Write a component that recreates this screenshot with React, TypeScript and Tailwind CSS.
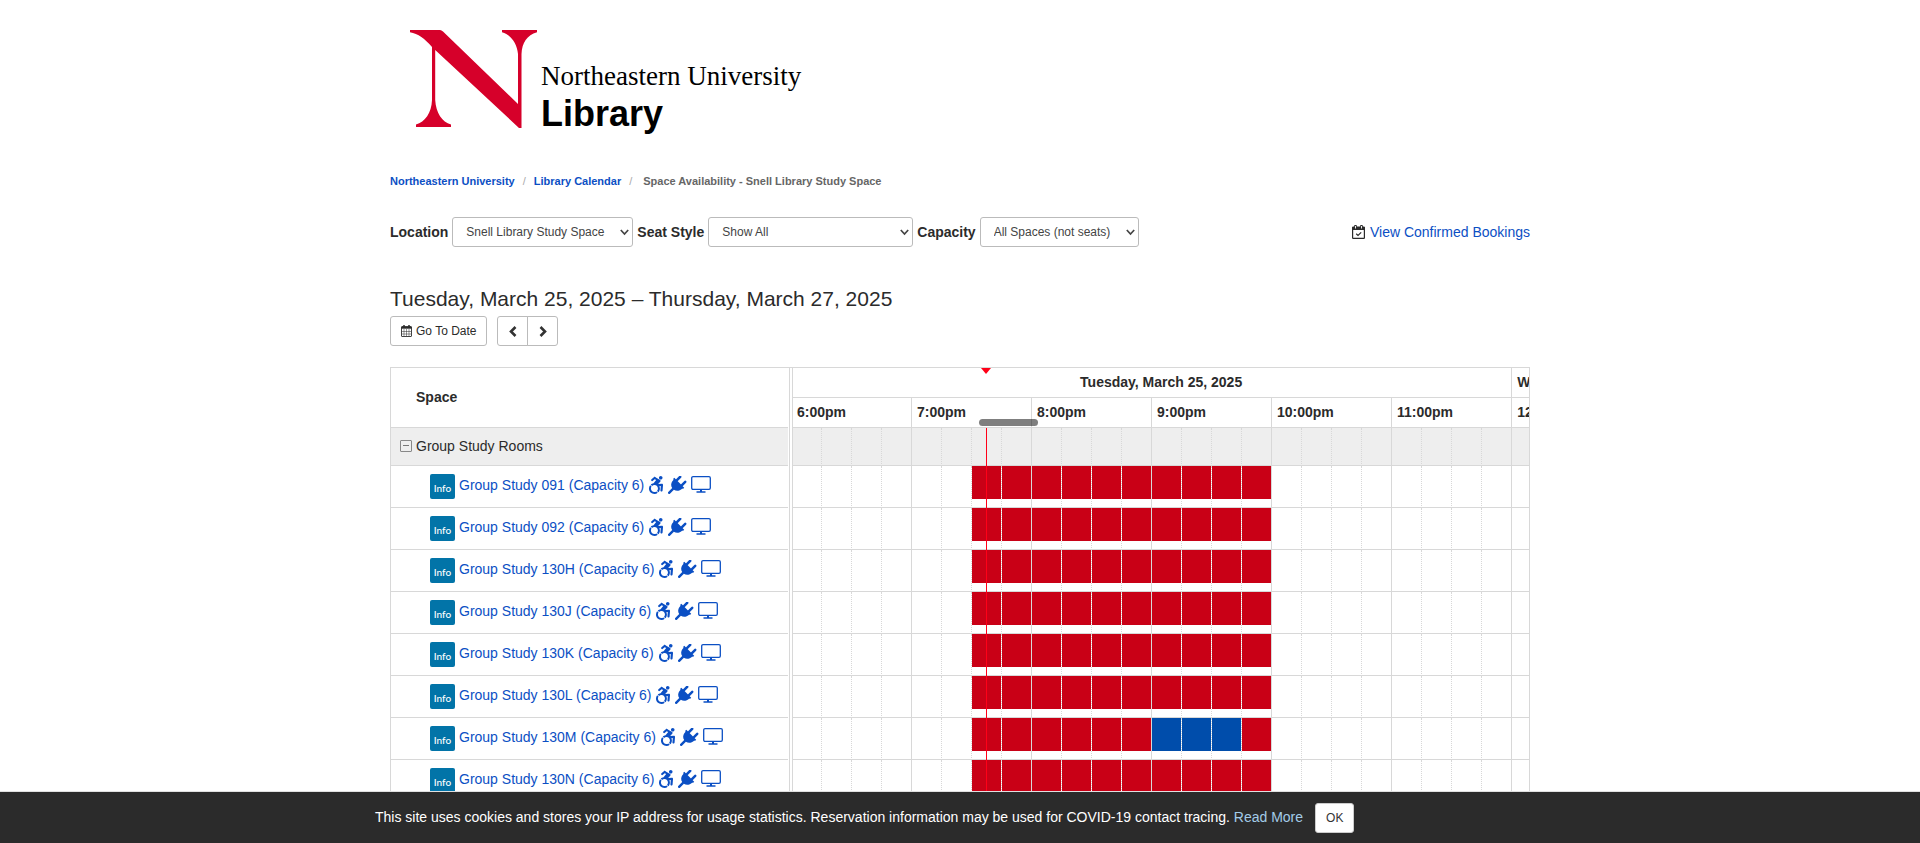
import React from "react";
import { FaAccessibleIcon } from "react-icons/fa";

const rooms = ["091", "092", "130H", "130J", "130K", "130L", "130M", "130N"];
const hours = ["6:00pm", "7:00pm", "8:00pm", "9:00pm", "10:00pm", "11:00pm"];
const slots = Array.from({ length: 24 }, (_, i) => i);

// Quarter-hour slots, counted from 6:00pm
const BOOKED_FROM = 6;
const BOOKED_TO = 16;
const openSlots: Record<string, number[]> = { "130M": [12, 13, 14] };

function slotBorder(i: number) {
  const right = i % 4 === 3 ? "border-r border-r-[#d8d8d8]" : "border-r border-r-[#d8d8d8] [border-right-style:dotted]";
  return i === 0 ? right + " border-l border-l-[#d8d8d8]" : right;
}

function LogoMark() {
  return (
    <svg width="127" height="99" viewBox="0 0 127 99" fill="#d6002a" aria-hidden="true">
      <path d="M0 0H30Q31.500 0 33 1.500L108 74V24C107 13 101 5 92 2.300V0H127V2.300C117 5 112 13 111.500 24V98H109L25.200 20V70C26 83 32 92 41 94.500V97H6V94.500C15 92 21.500 83 22 70V17C15 9 8 3.500 0 2.300Z" />
    </svg>
  );
}

function CalendarGrid() {
  return (
    <svg width="11" height="12" viewBox="0 0 11 12" fill="none" stroke="currentColor" aria-hidden="true">
      <rect x="0.500" y="1.500" width="10" height="10" rx="0.500" strokeWidth="0.900" />
      <path d="M0.500 2.800h10" strokeWidth="1.800" />
      <path d="M3 0v3M8 0v3" strokeWidth="1.500" />
      <path d="M3 4v7M5.500 4v7M8 4v7M1 6.500h9M1 9h9" strokeWidth="0.500" />
    </svg>
  );
}

function CalendarCheck() {
  return (
    <svg width="13" height="14" viewBox="0 0 13 14" fill="none" stroke="#2b2b2b" aria-hidden="true">
      <rect x="0.600" y="2" width="11.800" height="11.300" rx="0.600" strokeWidth="1.200" />
      <path d="M0.500 3.500h12" strokeWidth="3" />
      <path d="M3.500 1v2.500M9.500 1v2.500" strokeWidth="2.600" strokeLinecap="round" />
      <path d="M3.500 1v2.500M9.500 1v2.500" stroke="#fff" strokeWidth="0.900" />
      <path d="M4.200 8.800l1.800 1.700 3.200-3.200" strokeWidth="1.200" />
    </svg>
  );
}

function Plug() {
  return (
    <svg width="19" height="18" viewBox="0 0 19 18" fill="currentColor" aria-hidden="true">
      <g transform="rotate(45 9 9)">
        <path d="M2 5.800h14v1.800h-0.800c0 3.900-2 6.400-5 7V21.200H7.800V14.600c-3-0.600-5-3.100-5-7H2z" />
        <rect x="4.200" y="-0.300" width="2.500" height="7" rx="1.200" />
        <rect x="11.300" y="-0.300" width="2.500" height="7" rx="1.200" />
      </g>
    </svg>
  );
}

function Monitor() {
  return (
    <svg width="20" height="17" viewBox="0 0 20 17" fill="none" stroke="currentColor" className="shrink-0" aria-hidden="true">
      <rect x="0.700" y="0.700" width="18.600" height="12.600" rx="1.300" strokeWidth="1.300" />
      <path d="M10 13v3" strokeWidth="2" />
      <path d="M5.500 16h9" strokeWidth="1.500" />
    </svg>
  );
}

function Chevron({ d }: { d: string }) {
  return (
    <svg width="8" height="11" viewBox="0 0 8 11" fill="none" stroke="#333" strokeWidth="2.600" aria-hidden="true">
      <path d={d} />
    </svg>
  );
}

function Filter({ id, label, value, width }: { id: string; label: string; value: string; width: string }) {
  return (
    <div className="flex items-center gap-1">
      <label htmlFor={id} className="text-sm font-bold leading-5">{label}</label>
      <div className={"relative " + width}>
        <select id={id} className="h-[30px] w-full appearance-none rounded-[3px] border border-[#bbb] bg-white pl-[13px] pr-6 text-xs text-[#444]">
          <option>{value}</option>
        </select>
        <svg className="pointer-events-none absolute right-1 top-3 text-[#444]" width="9" height="7" viewBox="0 0 9 7" fill="none" stroke="currentColor" strokeWidth="1.700" aria-hidden="true">
          <path d="M0.800 1l3.700 4 3.700-4" />
        </svg>
      </div>
    </div>
  );
}

export default function App() {
  return (
    <div className="bg-white font-['Liberation_Sans',Arial,sans-serif] text-sm leading-5 text-[#2b2b2b]">
      <div className="mx-auto max-w-[1140px]">
        <header className="pl-5 pt-[30px]">
          <a href="#library" className="flex w-fit gap-1">
            <LogoMark />
            <span className="flex flex-col gap-1 pt-8 text-black">
              <span className="font-['Liberation_Serif',serif] text-[27px] leading-7">Northeastern University</span>
              <span className="text-4xl font-bold leading-10">Library</span>
            </span>
          </a>
        </header>

        <nav aria-label="Breadcrumb" className="mt-[39px]">
          <ol className="flex text-[11px] font-bold leading-4">
            <li><a href="#neu" className="text-[#0b4fc4]">Northeastern University</a></li>
            <li className="px-2 font-normal text-[#aaa]">/</li>
            <li><a href="#calendar" className="text-[#0b4fc4]">Library Calendar</a></li>
            <li className="pl-2 pr-[11px] font-normal text-[#aaa]">/</li>
            <li className="text-[#666]">Space Availability - Snell Library Study Space</li>
          </ol>
        </nav>

        <div className="mt-7 flex flex-wrap items-center gap-1">
          <Filter id="location" label="Location" value="Snell Library Study Space" width="w-[181px]" />
          <Filter id="seat" label="Seat Style" value="Show All" width="w-[205px]" />
          <Filter id="capacity" label="Capacity" value="All Spaces (not seats)" width="w-[159px]" />
          <div className="ml-auto flex items-center gap-[5px]">
            <CalendarCheck />
            <a href="#bookings" className="text-[#0b4fc4]">View Confirmed Bookings</a>
          </div>
        </div>

        <h2 className="mt-10 text-[21px] leading-6">Tuesday, March 25, 2025 – Thursday, March 27, 2025</h2>
        <div className="mt-[5px] flex gap-2.5">
          <button className="flex h-[30px] items-center gap-1 rounded-[3px] border border-[#bbb] px-2.5 text-xs">
            <CalendarGrid />
            Go To Date
          </button>
          <div className="flex h-[30px]">
            <button aria-label="Previous" className="flex w-[31px] items-center justify-center rounded-l-[3px] border border-[#bbb]">
              <Chevron d="M6.500 1l-4.500 4.500 4.500 4.500" />
            </button>
            <button aria-label="Next" className="-ml-px flex w-[31px] items-center justify-center rounded-r-[3px] border border-[#bbb]">
              <Chevron d="M1.500 1l4.500 4.500-4.500 4.500" />
            </button>
          </div>
        </div>

        <div className="relative mt-[21px] overflow-hidden border-x border-t border-[#d8d8d8]">
          <table className="w-full table-fixed border-separate border-spacing-0">
            <colgroup>
              <col className="w-[397px]" />
              <col className="w-1" />
              {slots.map((i) => <col key={i} className="w-[30px]" />)}
              <col />
            </colgroup>
            <thead>
              <tr className="h-[30px]">
                <th rowSpan={2} className="border-b border-[#d8d8d8] pb-0.5 pl-[25px] pt-0 text-left">Space</th>
                <td rowSpan={2} className="p-0" />
                <th colSpan={24} className="border-x border-b border-[#d8d8d8] pb-0.5 pl-[18px] pt-0 text-center">Tuesday, March 25, 2025</th>
                <th className="overflow-hidden whitespace-nowrap border-b border-[#d8d8d8] pb-0.5 pl-[5px] pt-0 text-left">Wednesday, March 26, 2025</th>
              </tr>
              <tr className="h-[30px]">
                {hours.map((h, i) => (
                  <th key={h} colSpan={4} className={"border-b border-r border-[#d8d8d8] pb-0.5 pt-0 text-left " + (i === 0 ? "border-l pl-1" : "pl-[5px]")}>{h}</th>
                ))}
                <th className="overflow-hidden whitespace-nowrap border-b border-[#d8d8d8] pb-0.5 pl-[5px] pt-0 text-left">12:00am</th>
              </tr>
            </thead>
            <tbody>
              <tr className="h-[38px]">
                <td className="border-b border-[#d8d8d8] bg-[#eee] p-0 pb-0.5 pl-[9px]">
                  <div className="flex items-center gap-1">
                    <button aria-label="Collapse group" className="flex size-3 items-center justify-center rounded-[1px] border border-[#888]">
                      <span className="h-px w-1.5 bg-[#777]" />
                    </button>
                    Group Study Rooms
                  </div>
                </td>
                <td className="p-0" />
                {slots.map((i) => <td key={i} className={"border-b border-b-[#d8d8d8] bg-[#eee] p-0 " + slotBorder(i)} />)}
                <td className="border-b border-[#d8d8d8] bg-[#eee] p-0" />
              </tr>
              {rooms.map((room) => (
                <tr key={room} className="h-[42px]">
                  <td className="border-b border-[#d8d8d8] p-0 pl-[39px]">
                    <div className="flex items-center gap-1 text-[#0b4fc4]">
                      <button className="size-[25px] rounded-[2px] bg-[#0274a8] pt-0.5 font-[Lato,sans-serif] text-[10px] font-medium leading-3 text-white">Info</button>
                      <a href={"#room-" + room} className="flex items-center gap-1 pb-1">
                        Group Study {room} (Capacity 6)
                        <FaAccessibleIcon className="h-[18px] w-4" />
                        <Plug />
                        <Monitor />
                      </a>
                    </div>
                  </td>
                  <td className="p-0" />
                  {slots.map((i) => (
                    <td key={i} className={"border-b border-b-[#d8d8d8] p-0 align-top " + slotBorder(i)}>
                      {i >= BOOKED_FROM && i < BOOKED_TO && (
                        <div className={"h-[33px] " + (openSlots[room]?.includes(i) ? "bg-[#004dab]" : "bg-[#c90016]")} />
                      )}
                    </td>
                  ))}
                  <td className="border-b border-[#d8d8d8] p-0" />
                </tr>
              ))}
            </tbody>
          </table>
          <div className="absolute inset-y-0 left-[398px] w-px bg-[#d8d8d8]" />
          <div className="absolute left-[590px] top-0 h-0 w-0 border-x-[5px] border-t-[6px] border-x-transparent border-t-[#ff0018]" />
          <div className="absolute bottom-0 left-[595px] top-[60px] w-px bg-[#ff0018]" />
          <div className="absolute left-[588px] top-[51px] h-[7px] w-[59px] rounded-full bg-black/50" />
        </div>
      </div>

      <div className="fixed inset-x-0 bottom-0 border-t border-[#e0e0e0] bg-[#2b2b2b]">
        <div className="mx-auto flex h-[51px] max-w-[1170px] items-center text-white">
          <p className="pb-0.5">
            This site uses cookies and stores your IP address for usage statistics. Reservation information may be used for COVID-19 contact tracing.{" "}
            <a href="#privacy" className="text-[#a3cbe8]">Read More</a>
          </p>
          <button className="ml-3 h-[30px] rounded-[3px] border border-[#ccc] bg-white px-2.5 text-xs text-[#333]">OK</button>
        </div>
      </div>
    </div>
  );
}
